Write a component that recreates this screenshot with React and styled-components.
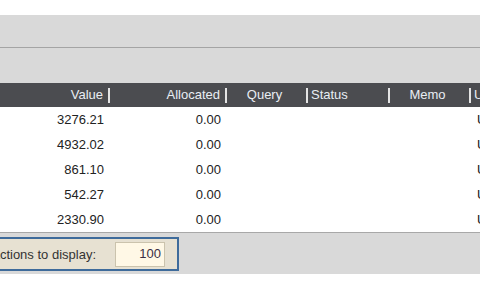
import React from 'react';
import styled, { createGlobalStyle } from 'styled-components';

const GlobalStyle = createGlobalStyle`
    html, body {
        margin: 0;
        padding: 0;
        background: #ffffff;
        overflow: hidden;
    }
    body {
        font-family: "Liberation Sans", Arial, sans-serif;
    }
`

const Page = styled.div`
    width: 480px;
    height: 290px;
    overflow: hidden;
    display: flex;
    flex-direction: column;
`

const TopSpace = styled.div`
    height: 15px;
    flex: none;
`

const Toolbar = styled.div`
    height: ${props => props.h}px;
    flex: none;
    background: #d9d9d9;
    border-bottom: ${props => props.line ? '1px solid #a4a4a4' : 'none'};
`

const Grid = styled.div`
    display: grid;
    grid-template-columns: 109px 117px 81px 82px 81px 1fr;
    width: 560px;
`

const HeadRow = styled(Grid)`
    height: 24px;
    background: #4b4c50;
    color: #e9eef4;
    font-size: 13px;
`

const HeadCell = styled.div`
    position: relative;
    display: flex;
    align-items: center;
    justify-content: ${props => props.align === 'right' ? 'flex-end' : props.align === 'center' ? 'center' : 'flex-start'};
    padding: 0 ${props => props.align === 'right' ? '6px' : '4px'} 2px ${props => props.align === 'left' ? '4px' : '0'};
    white-space: nowrap;
    &::after {
        content: '';
        display: ${props => props.last ? 'none' : 'block'};
        position: absolute;
        right: -1px;
        top: 5px;
        width: 2px;
        height: 15px;
        background: #e4e4e4;
    }
`

const Body = styled.div`
    flex: none;
    border-bottom: 1px solid #a8a8a8;
`

const Row = styled(Grid)`
    height: 25px;
    font-size: 13px;
    color: #222222;
`

const Cell = styled.div`
    display: flex;
    align-items: center;
    justify-content: ${props => props.align === 'right' ? 'flex-end' : 'flex-start'};
    padding: 0 ${props => props.align === 'right' ? '5px' : '0'} 0 ${props => props.align === 'left' ? '7px' : '0'};
    white-space: nowrap;
`

const Footer = styled.div`
    height: 41px;
    flex: none;
    background: #d9d9d9;
    padding-top: 4px;
    box-sizing: border-box;
`

const DisplayBox = styled.div`
    width: 181px;
    height: 34px;
    margin-left: -2px;
    box-sizing: border-box;
    border: 2px solid #3e6b9b;
    background: #e7e1d2;
    display: flex;
    align-items: center;
    justify-content: flex-end;
    gap: 19px;
    padding-right: 12px;
    overflow: hidden;
`

const Label = styled.span`
    font-size: 13px;
    color: #333333;
    white-space: nowrap;
    flex: none;
`

const CountInput = styled.input`
    width: 50px;
    height: 25px;
    box-sizing: border-box;
    flex: none;
    margin: 1px 0 0 0;
    border: 1px solid #cbc3ad;
    background: #fff8e6;
    font-family: "Liberation Sans", Arial, sans-serif;
    font-size: 13px;
    color: #3a2f45;
    text-align: right;
    padding: 0 3px 2px 0;
    outline: none;
`

const rows = [
    { value: '3276.21', allocated: '0.00' },
    { value: '4932.02', allocated: '0.00' },
    { value: '861.10', allocated: '0.00' },
    { value: '542.27', allocated: '0.00' },
    { value: '2330.90', allocated: '0.00' },
]

const App = () => {
    return (
        <Page>
            <GlobalStyle />
            <TopSpace />
            <Toolbar h={32} line />
            <Toolbar h={35} />
            <HeadRow>
                <HeadCell align="right">Value</HeadCell>
                <HeadCell align="right">Allocated</HeadCell>
                <HeadCell align="center">Query</HeadCell>
                <HeadCell align="left">Status</HeadCell>
                <HeadCell align="center">Memo</HeadCell>
                <HeadCell align="left" last>User</HeadCell>
            </HeadRow>
            <Body>
                {rows.map((item, i) => (
                    <Row key={i}>
                        <Cell align="right">{item.value}</Cell>
                        <Cell align="right">{item.allocated}</Cell>
                        <Cell />
                        <Cell />
                        <Cell />
                        <Cell align="left">Unallocated</Cell>
                    </Row>
                ))}
            </Body>
            <Footer>
                <DisplayBox>
                    <Label>Number of transactions to display:</Label>
                    <CountInput type="text" defaultValue="100" />
                </DisplayBox>
            </Footer>
        </Page>
    )
}

export default App;
